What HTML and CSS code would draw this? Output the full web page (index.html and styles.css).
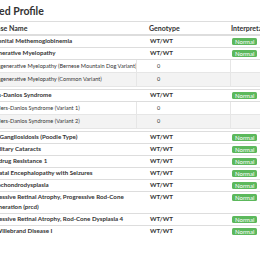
FILE: index.html
```html
<!DOCTYPE html>
<html lang="en">
<head>
    <meta charset="UTF-8">
    <title>Tested Profile</title>
    <link rel="stylesheet" href="styles.css">
</head>
<body>
    <div class="container">
        <h2>Tested Profile</h2>
        <table class="profile">
            <thead>
                <tr>
                    <th class="col-name">Disease Name</th>
                    <th class="col-geno">Genotype</th>
                    <th class="col-interp">Interpretation</th>
                </tr>
            </thead>
            <tbody>
                <tr>
                    <td>Congenital Methemoglobinemia</td>
                    <td>WT/WT</td>
                    <td><span class="badge">Normal</span></td>
                </tr>
                <tr>
                    <td>Degenerative Myelopathy</td>
                    <td>WT/WT</td>
                    <td><span class="badge">Normal</span></td>
                </tr>
                <tr class="variants-row">
                    <td colspan="3">
                        <table class="variants">
                            <tr>
                                <td class="v-name">Degenerative Myelopathy (Bernese Mountain Dog Variant)</td>
                                <td class="v-count">0</td>
                                <td></td>
                            </tr>
                            <tr class="alt">
                                <td class="v-name">Degenerative Myelopathy (Common Variant)</td>
                                <td class="v-count">0</td>
                                <td></td>
                            </tr>
                        </table>
                    </td>
                </tr>
                <tr>
                    <td>Ehlers-Danlos Syndrome</td>
                    <td>WT/WT</td>
                    <td><span class="badge">Normal</span></td>
                </tr>
                <tr class="variants-row">
                    <td colspan="3">
                        <table class="variants">
                            <tr>
                                <td class="v-name">Ehlers-Danlos Syndrome (Variant 1)</td>
                                <td class="v-count">0</td>
                                <td></td>
                            </tr>
                            <tr class="alt">
                                <td class="v-name">Ehlers-Danlos Syndrome (Variant 2)</td>
                                <td class="v-count">0</td>
                                <td></td>
                            </tr>
                        </table>
                    </td>
                </tr>
                <tr>
                    <td>GM1 Gangliosidosis (Poodle Type)</td>
                    <td>WT/WT</td>
                    <td><span class="badge">Normal</span></td>
                </tr>
                <tr>
                    <td>Hereditary Cataracts</td>
                    <td>WT/WT</td>
                    <td><span class="badge">Normal</span></td>
                </tr>
                <tr>
                    <td>Multidrug Resistance 1</td>
                    <td>WT/WT</td>
                    <td><span class="badge">Normal</span></td>
                </tr>
                <tr>
                    <td>Neonatal Encephalopathy with Seizures</td>
                    <td>WT/WT</td>
                    <td><span class="badge">Normal</span></td>
                </tr>
                <tr>
                    <td>Osteochondrodysplasia</td>
                    <td>WT/WT</td>
                    <td><span class="badge">Normal</span></td>
                </tr>
                <tr>
                    <td>Progressive Retinal Atrophy, Progressive Rod-Cone Degeneration (prcd)</td>
                    <td>WT/WT</td>
                    <td><span class="badge">Normal</span></td>
                </tr>
                <tr>
                    <td>Progressive Retinal Atrophy, Rod-Cone Dysplasia 4</td>
                    <td>WT/WT</td>
                    <td><span class="badge">Normal</span></td>
                </tr>
                <tr>
                    <td>von Willebrand Disease I</td>
                    <td>WT/WT</td>
                    <td><span class="badge">Normal</span></td>
                </tr>
            </tbody>
        </table>
    </div>
</body>
</html>
```

FILE: styles.css
```css
body {
    margin: 0;
    background: #fff;
    font-family: Lato, 'Liberation Sans', sans-serif;
    color: #333;
    overflow: hidden;
}
.container {
    margin-left: -20px;
    width: 340px;
}
h2 {
    font-size: 10.5px;
    font-weight: 700;
    line-height: 12px;
    margin: 5px 0 4px 0;
}
.profile {
    width: 100%;
    border-collapse: collapse;
    table-layout: fixed;
    font-size: 6.2px;
}
.col-name { width: 159px; }
.col-geno { width: 75px; }
.profile th,
.profile td {
    text-align: left;
    vertical-align: top;
    padding: 0.5px 4px;
    line-height: 10px;
    font-weight: 700;
    border-top: 1px solid #ddd;
}
.profile th {
    font-size: 7px;
    line-height: 8px;
    padding: 2px 4px 1.5px 3px;
    border-bottom: 2px solid #ddd;
}
.profile .variants-row > td {
    padding: 0 0 2px 10px;
}
.variants {
    width: 100%;
    border-collapse: collapse;
    table-layout: fixed;
    border-bottom: 1px solid #e6e6e6;
}
.profile .variants td {
    font-size: 5.6px;
    font-weight: 400;
    padding: 2px 3px 2px 3px;
    line-height: 8.5px;
    border-top: none;
    border-bottom: 1px solid #e6e6e6;
}
.profile .variants .v-name {
    width: 140px;
    white-space: nowrap;
    overflow: hidden;
}
.profile .variants .v-count {
    width: 70px;
    font-size: 5.5px;
    padding-left: 20px;
    border-left: 1px solid #e6e6e6;
    border-right: 1px solid #e6e6e6;
}
.profile .variants .alt td {
    background: #f3f3f3;
}
.badge {
    display: inline-block;
    vertical-align: middle;
    background: #5cb85c;
    color: #fff;
    font-size: 6px;
    font-weight: 400;
    line-height: 7px;
    padding: 0 3px;
    border-radius: 1.5px;
}
```
